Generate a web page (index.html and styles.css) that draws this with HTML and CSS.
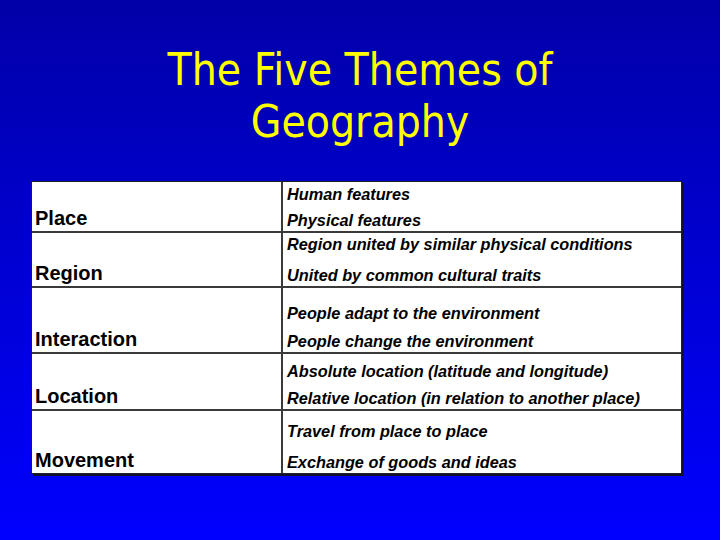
FILE: index.html
```html
<!DOCTYPE html>
<html lang="en">
<head>
<meta charset="utf-8">
<title>The Five Themes of Geography</title>
<link rel="stylesheet" href="styles.css">
</head>
<body>
<main class="slide">
  <h1 class="title">The Five Themes of<br>Geography</h1>
  <section class="table">
    <div class="row r1">
      <div class="term">Place</div>
      <div class="desc"><div>Human features</div><div class="l2">Physical features</div></div>
    </div>
    <div class="row r2">
      <div class="term">Region</div>
      <div class="desc"><div>Region united by similar physical conditions</div><div class="l2">United by common cultural traits</div></div>
    </div>
    <div class="row r3">
      <div class="term">Interaction</div>
      <div class="desc"><div>People adapt to the environment</div><div class="l2">People change the environment</div></div>
    </div>
    <div class="row r4">
      <div class="term">Location</div>
      <div class="desc"><div>Absolute location (latitude and longitude)</div><div class="l2">Relative location (in relation to another place)</div></div>
    </div>
    <div class="row r5">
      <div class="term">Movement</div>
      <div class="desc"><div>Travel from place to place</div><div class="l2">Exchange of goods and ideas</div></div>
    </div>
  </section>
</main>
</body>
</html>
```
FILE: styles.css
```css
* { box-sizing: border-box; }
html, body { margin: 0; padding: 0; }
body {
  width: 720px;
  height: 540px;
  overflow: hidden;
  background: linear-gradient(to bottom, #0000a8 0%, #0000d8 55%, #0000ff 100%);
}
.slide {
  display: flex;
  flex-direction: column;
  padding-top: 44px;
}
.title {
  margin: 0;
  text-align: center;
  color: #ffff00;
  font-family: "DejaVu Sans Condensed", "DejaVu Sans", sans-serif;
  font-stretch: condensed;
  font-weight: normal;
  font-size: 44px;
  line-height: 52px;
}
.table {
  margin: 33px 0 0 31px;
  width: 651px;
  background: #ffffff;
  border: 1px solid #202020;
  box-shadow: 2px 2px 0 #101030;
  font-family: "Liberation Sans", Arial, sans-serif;
  color: #000;
}
.row {
  display: grid;
  grid-template-columns: 251px 1fr;
  border-top: 2px solid #3a3a3a;
}
.row.r1 { border-top: none; height: 49px; }
.row.r2 { height: 55px; }
.row.r3 { height: 66px; }
.row.r4 { height: 57px; }
.row.r5 { height: 64px; }
.term {
  display: flex;
  align-items: flex-end;
  padding: 0 0 2px 3px;
  border-right: 2px solid #3a3a3a;
  font-weight: bold;
  font-size: 20px;
  line-height: 22px;
}
.desc {
  display: flex;
  flex-direction: column;
  justify-content: flex-end;
  padding: 0 0 1px 4px;
  font-weight: bold;
  font-style: italic;
  font-size: 16.3px;
  line-height: 20px;
}
.r1 .l2 { margin-top: 6px; }
.r2 .l2 { margin-top: 11px; }
.r3 .l2 { margin-top: 8px; }
.r4 .l2 { margin-top: 7px; }
.r5 .l2 { margin-top: 11px; }
```
